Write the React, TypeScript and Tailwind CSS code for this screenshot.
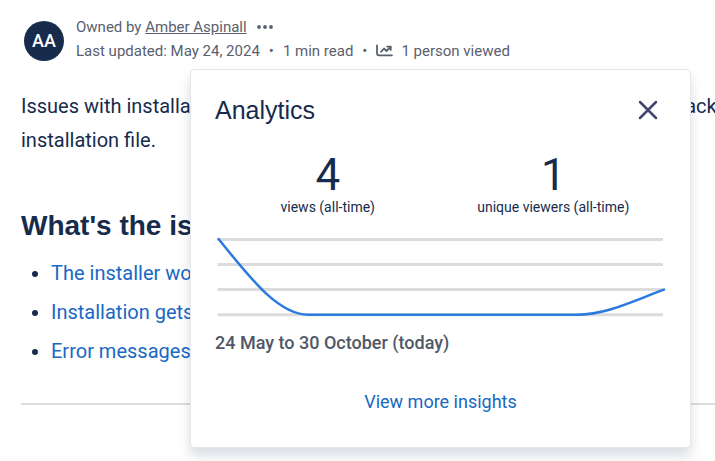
import { useState } from "react";

const issues = [
  "The installer won't open",
  "Installation gets stuck",
  "Error messages during install",
];

const stats = [
  { value: 4, label: "views (all-time)" },
  { value: 1, label: "unique viewers (all-time)" },
];

function TrendIcon() {
  return (
    <svg
      className="h-4 w-[17px]"
      viewBox="0 0 17 16"
      fill="none"
      stroke="currentColor"
      strokeWidth="1.8"
      strokeLinejoin="round"
      strokeLinecap="round"
      aria-hidden="true"
    >
      <path d="M1 2.5v7.8q0 2 2 2h13" />
      <path d="M5 8.8l3-3.3 2.5 2.5L14.5 4" />
      <path d="M11.2 3.6h3.5v3.5" />
    </svg>
  );
}

function ViewsChart() {
  return (
    <svg
      className="block h-auto w-full overflow-visible"
      viewBox="0 0 450 80"
      fill="none"
      role="img"
      aria-label="Views over time"
    >
      <path
        d="M2.5 2.5H447M2.5 27.5H447M2.5 52.5H447M2.5 77.5H447"
        stroke="#dcdcde"
        strokeWidth="3"
      />
      <path
        d="M3.5 2C33 38 62 77.5 93 77.5H361C391 77.5 419 63 448 52.5"
        stroke="#2b7ade"
        strokeWidth="2.5"
        strokeLinecap="round"
      />
    </svg>
  );
}

function AnalyticsPopup({ onClose }: { onClose: () => void }) {
  return (
    <section
      aria-label="Analytics"
      className="absolute top-[69px] left-[190px] w-[501px] rounded border border-gray-200 bg-white px-6 pt-5 pb-7 shadow-[0_8px_12px_rgba(9,30,66,0.15)]"
    >
      <div className="flex items-center justify-between">
        <h2 className="font-['Liberation_Sans',sans-serif] text-[25px] leading-10">
          Analytics
        </h2>
        <button
          type="button"
          aria-label="Close"
          onClick={onClose}
          className="flex size-9 items-center justify-center text-[#44466f]"
        >
          <svg
            className="size-5"
            viewBox="0 0 20 20"
            stroke="currentColor"
            strokeWidth="2.5"
            strokeLinecap="round"
            aria-hidden="true"
          >
            <path d="M2 2l16 16M18 2L2 18" />
          </svg>
        </button>
      </div>
      <div className="mt-6 grid grid-cols-2">
        {stats.map((stat) => (
          <div key={stat.label} className="flex flex-col items-center">
            <span className="text-[44px] leading-[43px]">{stat.value}</span>
            <span className="text-sm leading-5">{stat.label}</span>
          </div>
        ))}
      </div>
      <div className="mt-5">
        <ViewsChart />
      </div>
      <p className="mt-4 text-lg leading-5 font-medium text-[#505866]">
        24 May to 30 October (today)
      </p>
      <div className="mt-8 flex justify-center">
        <a href="#insights" className="text-lg leading-[34px] text-[#1868c4]">
          View more insights
        </a>
      </div>
    </section>
  );
}

export default function App() {
  const [open, setOpen] = useState(true);

  return (
    <div className="relative min-h-screen overflow-hidden bg-white pt-[15px] pl-[21px] font-[Roboto,sans-serif] text-[#172b4d]">
      <header className="flex items-center gap-3 pl-[3px] text-[15px] leading-6 text-[#5a606e]">
        <div className="mt-1 flex size-10 items-center justify-center rounded-full bg-[#172b4d] text-lg font-medium text-white">
          AA
        </div>
        <div>
          <div className="flex items-center gap-2">
            <span>
              Owned by{" "}
              <a href="#owner" className="underline">
                Amber Aspinall
              </a>
            </span>
            <button type="button" aria-label="More actions">
              <svg className="h-4 w-5" viewBox="0 0 20 16" fill="currentColor">
                <circle cx="4" cy="8" r="1.9" />
                <circle cx="10" cy="8" r="1.9" />
                <circle cx="16" cy="8" r="1.9" />
              </svg>
            </button>
          </div>
          <div className="flex items-center gap-[9px]">
            <span>Last updated: May 24, 2024</span>
            <span>•</span>
            <span>1 min read</span>
            <span>•</span>
            <button
              type="button"
              onClick={() => setOpen(!open)}
              className="flex items-center gap-2"
            >
              <TrendIcon />
              1 person viewed
            </button>
          </div>
        </div>
      </header>

      <main>
        <p className="mt-[26px] text-xl leading-[34px] whitespace-nowrap">
          Issues with installation are often caused by a badly damaged or outdated pack
          <br />
          installation file.
        </p>
        <h1 className="mt-12 font-['Liberation_Sans',sans-serif] text-[28px] leading-[41px] font-bold">
          What's the issue?
        </h1>
        <ul className="mt-2 list-disc pl-[30px] text-xl leading-[39px]">
          {issues.map((issue) => (
            <li key={issue}>
              <a href="#issue" className="text-[#1868c4]">
                {issue}
              </a>
            </li>
          ))}
        </ul>
        <hr className="mt-8 border-t-2 border-[#dcdcde]" />
      </main>

      {open && <AnalyticsPopup onClose={() => setOpen(false)} />}
    </div>
  );
}
